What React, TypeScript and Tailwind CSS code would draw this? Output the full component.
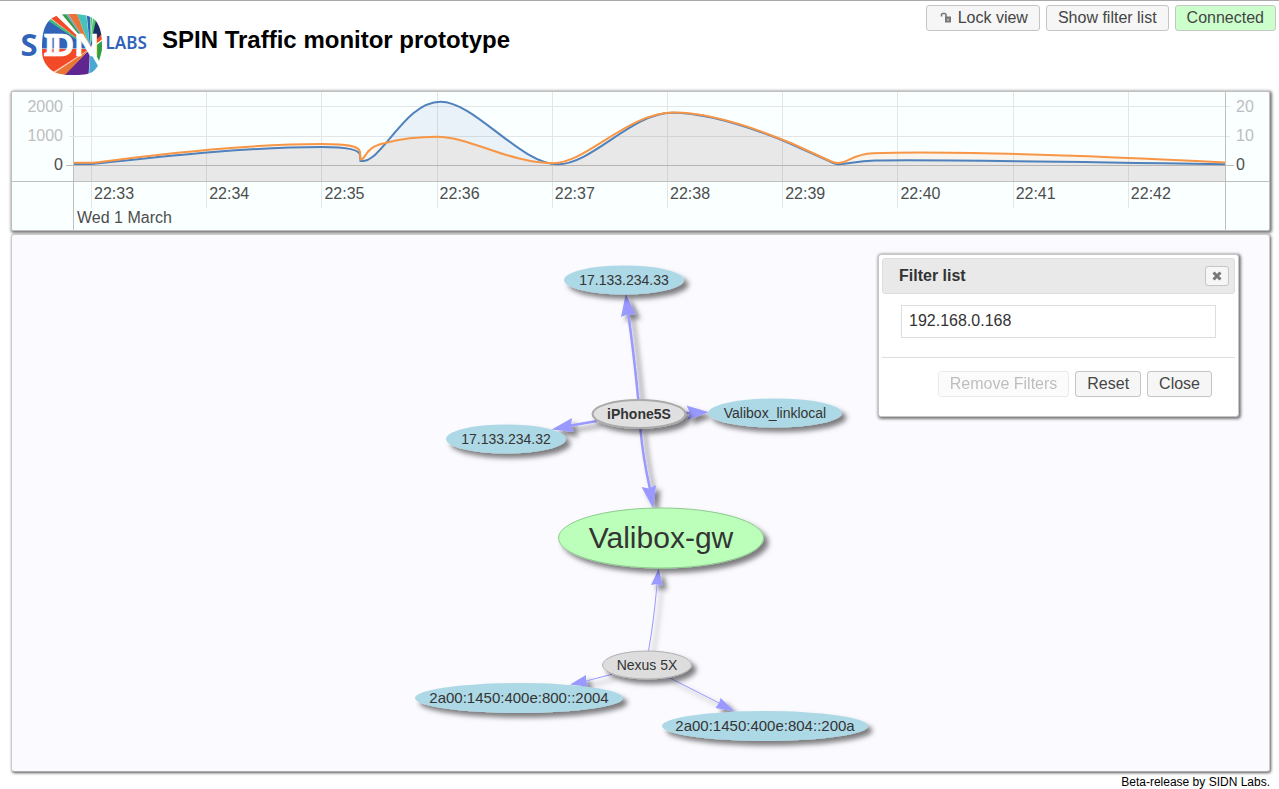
import React from "react";

const TIMES = ["22:33", "22:34", "22:35", "22:36", "22:37", "22:38", "22:39", "22:40", "22:41", "22:42"];

const TRAFFIC =
  "M74 164H92C150 158 240 147.200 322 147C345 147 359.500 149 360 155L360.500 161C382 164 404 101.700 440.500 101.700" +
  "C475 101.700 520 164.300 558 164.300C592 164.300 632 112.800 672 112.800C710 112.800 760 131 790 143.500" +
  "L828 160.500C833 163 835 164.200 838 164.200C850 164 855 161 875 160.600C920 159.600 1060 161.500 1225 164.200";

const PACKETS =
  "M74 162.800H92C150 156 240 144 322 144C348 144 359.500 146 360 152L360.500 159.500C366 160 364 147 385 143" +
  "C400 139 420 136.800 437 136.800C470 136.800 510 163.200 553 163.200C587 163.200 627 112.600 674 112.600" +
  "C712 112.600 762 131 792 143.500L828 160C832 162 835 163 838 163C848 163 852 154.300 873 153.300" +
  "C930 151 1060 154 1225 162.600";

function Logo() {
  return (
    <svg width="128" height="64" viewBox="21 13 128 64" role="img" aria-label="SIDN Labs">
      <defs>
        <clipPath id="badge">
          <path d="M42 50C42 40 42.500 31 46 25C50 17 58 14 70 14C82 14 91 15 96 21C101 28 102 36 102 46C102 57 100 66 94 71C89 75 81 75 71 75C60 75 53 73 48 67C43 61 42 56 42 50Z" />
        </clipPath>
      </defs>
      <g clipPath="url(#badge)">
        <path d="M40 12H104V77H40Z" fill="#fff" />
        <path d="M90 48.500L40 48.500V30L49 20Z" fill="#3164b8" />
        <path d="M90 48L48.500 20.500L50 19Z" fill="#43b87c" stroke="#43b87c" />
        <path d="M90 48L50.500 18L55.500 15Z" fill="#f24a27" />
        <path d="M90 48L60 12H64.500Z" fill="#2f9f46" />
        <path d="M90 48L65 12H66.500Z" fill="#6f8fc7" stroke="#6f8fc7" strokeWidth=".5" />
        <path d="M90 48L67 12H76.500Z" fill="#e87436" />
        <path d="M90 48L76.500 12H86Z" fill="#45c3bb" />
        <path d="M90 48L86.500 12H90Z" fill="#3164b8" />
        <path d="M90 48L90.500 12H92.500Z" fill="#43b87c" />
        <path d="M90 46L93.500 12L97 19Z" fill="#51c66e" />
        <path d="M90 47L96 20L104 32Z" fill="#1c2d66" />
        <path d="M90 48L104 31V38Z" fill="#f24a27" />
        <path d="M93 48L104 39V44L99 61Z" fill="#2f9f46" />
        <path d="M90 52L98 66L89 77Z" fill="#49a9d2" />
        <path d="M90 49L88.500 77H62Z" fill="#612590" />
        <path d="M90 49L64 76L52 74.500Z" fill="#e87436" />
        <path d="M90 49L54 72L40 66V49Z" fill="#f24a27" />
        <path d="M90 49L53 72.500" stroke="#f9c6ad" strokeWidth=".8" />
      </g>
      <g fontFamily='"Noto Sans", "Open Sans", sans-serif' fontWeight="700">
        <text x="20.500" y="56" fontSize="31" fill="#3164b8">S</text>
        <text x="43.500 51.500 74" y="56" fontSize="31" fill="#fff" stroke="#fff" strokeWidth=".6">IDN</text>
        <text x="105.500" y="49" fontSize="17" fontWeight="600" fill="#3164b8">LABS</text>
      </g>
    </svg>
  );
}

function UnlockedIcon() {
  return (
    <svg width="16" height="16" viewBox="0 0 16 16" aria-hidden="true">
      <path d="M3.500 6.500V4.500L4.500 3.500H7L8 4.500V7" fill="none" stroke="#777" strokeWidth="1.600" />
      <path d="M7 6.500H13V12.500H7Z" fill="#777" />
      <path d="M9.300 8.800H10.700V10.700H9.300Z" fill="#d5d5d5" />
    </svg>
  );
}

function CloseIcon() {
  return (
    <svg width="16" height="16" viewBox="0 0 16 16" aria-hidden="true">
      <path d="M4.500 4.500L11.500 11.500M11.500 4.500L4.500 11.500" stroke="#777" strokeWidth="3" />
    </svg>
  );
}

function Button({
  children,
  tone = "border-[#c5c5c5] bg-[#f6f6f6]",
  disabled,
}: {
  children: React.ReactNode;
  tone?: string;
  disabled?: boolean;
}) {
  return (
    <button
      type="button"
      disabled={disabled}
      className={`flex h-[26px] items-center gap-1 rounded-[3px] border px-[11px] text-base leading-6 text-[#454545] disabled:opacity-35 ${tone}`}
    >
      {children}
    </button>
  );
}

function AxisLabels({ values }: { values: string[] }) {
  return (
    <>
      {values.map((v) => (
        <span key={v} className={`h-5 leading-5 ${v === "0" ? "text-[#4d4d4d]" : "text-[#bebebe]"}`}>
          {v}
        </span>
      ))}
    </>
  );
}

function TrafficGraph() {
  return (
    <section
      aria-label="Traffic over time"
      className="rounded-xs border border-[#bfbfbf] bg-[#faffff] text-base shadow-[1px_1px_3px_1px_#777]"
    >
      <div className="flex border-b border-[#bfbfbf]">
        <div className="flex w-[62px] flex-col gap-[9px] border-r border-[#bfbfbf] pt-[5px] pr-[10px] text-right">
          <AxisLabels values={["2000", "1000", "0"]} />
        </div>
        <svg
          className="block h-[89px] min-w-0 flex-1 overflow-visible"
          viewBox="74 92 1151 89"
          preserveAspectRatio="none"
          aria-hidden="true"
        >
          <g stroke="#e5e5e5" shapeRendering="crispEdges">
            {TIMES.map((t, i) => (
              <path key={t} d={`M${91.5 + i * 115.2} 92V181`} />
            ))}
            <path d="M69 106.500H1230M69 136.500H1230" />
            <path d="M66 165.500H1234" stroke="#bfbfbf" />
          </g>
          <path d={`${PACKETS}V181H74Z`} fill="#f79646" fillOpacity=".1" />
          <path d={`${TRAFFIC}V181H74Z`} fill="#4f81bd" fillOpacity=".1" />
          <path d={TRAFFIC} fill="none" stroke="#4f81bd" strokeWidth="2" />
          <path d={PACKETS} fill="none" stroke="#f79646" strokeWidth="2" />
        </svg>
        <div className="flex w-11 flex-col gap-[9px] border-l border-[#bfbfbf] pt-[5px] pl-[10px]">
          <AxisLabels values={["20", "10", "0"]} />
        </div>
      </div>
      <div className="flex h-12 text-[#4d4d4d]">
        <div className="w-[62px] shrink-0 border-r border-[#bfbfbf]" />
        <div className="min-w-0 flex-1 overflow-hidden">
          <div className="flex pl-[17px]">
            {TIMES.map((t) => (
              <span
                key={t}
                className="h-[26px] shrink-0 grow basis-[115px] border-l border-[#e5e5e5] pl-0.5 leading-6 last:-mr-[18px]"
              >
                {t}
              </span>
            ))}
          </div>
          <div className="pl-[3px] leading-5">Wed 1 March</div>
        </div>
        <div className="w-11 shrink-0 border-l border-[#bfbfbf]" />
      </div>
    </section>
  );
}

type GraphNode = {
  label: string;
  x: number;
  y: number;
  rx: number;
  ry: number;
  size: number;
  fill: string;
  stroke?: string;
  selected?: boolean;
};

const NODES: GraphNode[] = [
  { label: "17.133.234.33", x: 624, y: 280, rx: 60, ry: 14.5, size: 14, fill: "#add8e6" },
  { label: "17.133.234.32", x: 506, y: 439, rx: 60, ry: 14.5, size: 14, fill: "#add8e6" },
  { label: "Valibox_linklocal", x: 775, y: 413, rx: 67, ry: 14.5, size: 14, fill: "#add8e6" },
  { label: "iPhone5S", x: 639, y: 414, rx: 46.5, ry: 14, size: 14, fill: "#e0e0e0", stroke: "#aaa", selected: true },
  { label: "Valibox-gw", x: 661, y: 538, rx: 102.5, ry: 30, size: 30, fill: "#bbffbb", stroke: "#8fc98f" },
  { label: "Nexus 5X", x: 647, y: 665, rx: 44.5, ry: 14, size: 14, fill: "#dddddd", stroke: "#b0b0b0" },
  { label: "2a00:1450:400e:800::2004", x: 519, y: 698, rx: 104, ry: 15, size: 15, fill: "#add8e6" },
  { label: "2a00:1450:400e:804::200a", x: 765, y: 726, rx: 103, ry: 15, size: 15, fill: "#add8e6" },
];

const EDGES = [
  { line: "M638.300 400Q634 355 628.300 314", head: "M625.700 294L621 317L628.300 314L636 314.700Z", width: 2.5 },
  { line: "M597 421L571 425.500", head: "M551.700 429.500L572 418L571 425.500L574 432Z", width: 2.5 },
  { line: "M684 413L692 412.700", head: "M709 412.300L686.500 405.500L690 412.700L687.300 420Z", width: 2.5 },
  { line: "M640.300 428Q643 458 650 489", head: "M653.300 508.500L641.500 487L649 488.500L656 485Z", width: 2.5 },
  { line: "M648.500 651Q654 620 657 584", head: "M658.700 568.500L651 585L657 584L662.700 586Z", width: 1 },
  { line: "M612 674.300L586 681", head: "M570 684.500L586 675L586 681L588 686.500Z", width: 1 },
  { line: "M669 677.500L719 703", head: "M734.700 711.500L720.700 698L719 703L715.500 708Z", width: 1 },
];

function NetworkGraph() {
  return (
    <svg className="block h-auto w-full" viewBox="12 235 1257 536" role="group" aria-label="Network graph">
      <defs>
        <filter id="shadow" filterUnits="userSpaceOnUse" x="12" y="235" width="1257" height="536">
          <feDropShadow dx="4.500" dy="4.500" stdDeviation="2.800" floodColor="#000" floodOpacity=".5" />
        </filter>
      </defs>
      {EDGES.map((e) => (
        <g key={e.line} filter="url(#shadow)">
          <path d={e.line} fill="none" stroke="#9999ff" strokeWidth={e.width} />
          <path d={e.head} fill="#9999ff" />
        </g>
      ))}
      {NODES.map((n) => (
        <g key={n.label}>
          <ellipse
            cx={n.x}
            cy={n.y}
            rx={n.rx}
            ry={n.ry}
            fill={n.fill}
            stroke={n.stroke}
            strokeWidth={n.selected ? 2 : 1}
            filter="url(#shadow)"
          />
          <text
            x={n.x}
            y={n.y + Math.round(n.size / 3)}
            textAnchor="middle"
            fontSize={n.size}
            fontWeight={n.selected ? 700 : 400}
            fill="#343434"
          >
            {n.label}
          </text>
        </g>
      ))}
    </svg>
  );
}

function FilterDialog() {
  return (
    <div
      role="dialog"
      aria-labelledby="filter-title"
      className="absolute top-[19px] right-[30px] w-[361px] rounded-[3px] border border-[#c5c5c5] bg-white p-[3px] pb-[19px] text-base text-[#333] shadow-[1px_1px_3px_1px_#777]"
    >
      <div className="flex h-9 items-center justify-between rounded-[3px] border border-[#ddd] bg-[#e9e9e9] pr-[5px] pl-4">
        <h2 id="filter-title" className="font-bold">Filter list</h2>
        <button
          type="button"
          aria-label="Close dialog"
          className="flex h-5 w-6 items-center justify-center rounded-[3px] border border-[#c5c5c5] bg-[#f6f6f6]"
        >
          <CloseIcon />
        </button>
      </div>
      <div className="px-[19px] pt-[11px] pb-[19px]">
        <input
          aria-label="Filtered address"
          defaultValue="192.168.0.168"
          className="block h-[33px] w-full border border-[#ddd] px-[7px] pb-0.5 outline-none"
        />
      </div>
      <div className="flex justify-end gap-[6px] border-t border-[#ddd] pt-[13px] pr-[23px]">
        <Button disabled>Remove Filters</Button>
        <Button>Reset</Button>
        <Button>Close</Button>
      </div>
    </div>
  );
}

export default function App() {
  return (
    <div className="border-t border-[#aaa] bg-white font-['Liberation_Sans',Arial,sans-serif]">
      <header className="flex h-[90px] items-start justify-between pr-[3px] pl-[21px]">
        <div className="flex gap-[13px] pt-3">
          <Logo />
          <h1 className="pt-[11px] text-2xl leading-8 font-bold text-black">SPIN Traffic monitor prototype</h1>
        </div>
        <div className="flex gap-[6px] pt-1">
          <Button>
            <UnlockedIcon />
            Lock view
          </Button>
          <Button>Show filter list</Button>
          <Button tone="border-[#c5c5c5] bg-[#ccffcc]">Connected</Button>
        </div>
      </header>
      <main className="flex flex-col gap-[3px] pr-[9px] pl-[11px]">
        <TrafficGraph />
        <section
          aria-label="Network"
          className="relative rounded-[3px] border border-[#ccc] border-b-[#aaa] bg-[#fafaff] shadow-[1px_1px_3px_#555]"
        >
          <NetworkGraph />
          <FilterDialog />
        </section>
      </main>
      <footer className="pt-[3px] pr-[9px] text-right text-xs leading-[14px] text-black">Beta-release by SIDN Labs.</footer>
    </div>
  );
}
